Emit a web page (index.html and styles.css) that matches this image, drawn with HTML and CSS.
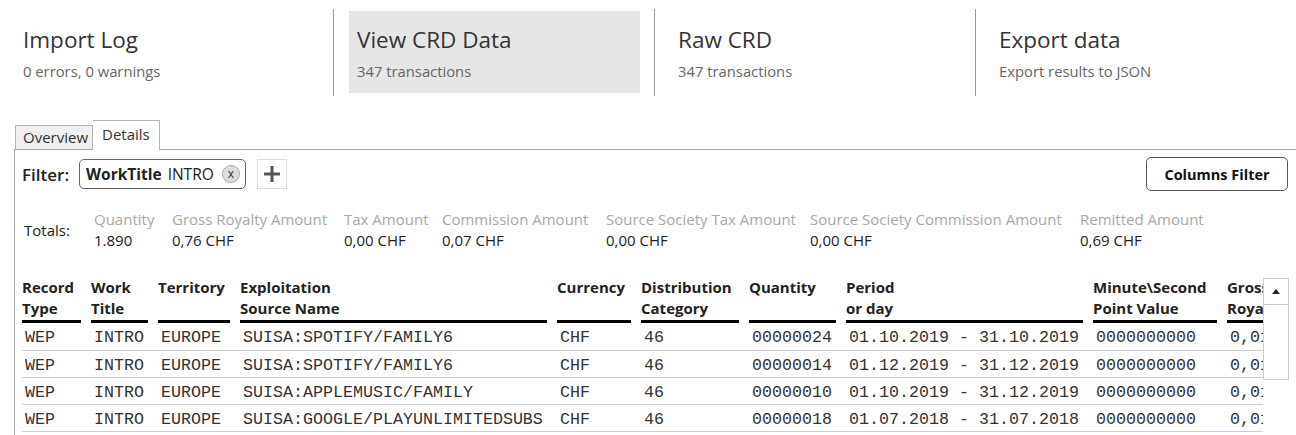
FILE: index.html
```html
<!DOCTYPE html>
<html lang="en">
<head>
    <meta charset="UTF-8">
    <title>CRD Viewer</title>
    <link rel="stylesheet" href="styles.css">
</head>
<body>
    <!-- Top navigation -->
    <div class="nav">
        <div class="nav-item">
            <div class="nav-box">
                <div class="nav-title">Import Log</div>
                <div class="nav-sub">0 errors, 0 warnings</div>
            </div>
        </div>
        <div class="nav-item">
            <div class="nav-box active">
                <div class="nav-title">View CRD Data</div>
                <div class="nav-sub">347 transactions</div>
            </div>
        </div>
        <div class="nav-item">
            <div class="nav-box">
                <div class="nav-title">Raw CRD</div>
                <div class="nav-sub">347 transactions</div>
            </div>
        </div>
        <div class="nav-item">
            <div class="nav-box">
                <div class="nav-title">Export data</div>
                <div class="nav-sub">Export results to JSON</div>
            </div>
        </div>
    </div>

    <!-- Tabs -->
    <div class="tabs">
        <div class="tab">Overview</div>
        <div class="tab active">Details</div>
    </div>

    <div class="panel">
        <!-- Filter row -->
        <div class="filter-row">
            <div class="filter-left">
                <span class="filter-label">Filter:</span>
                <span class="chip">
                    <b>WorkTitle</b>
                    <span class="chip-value">INTRO</span>
                    <span class="chip-x">x</span>
                </span>
                <button class="add-btn">
                    <svg width="18" height="18" viewBox="0 0 18 18">
                        <path d="M9 1v16M1 9h16" stroke="#555" stroke-width="3" fill="none"/>
                    </svg>
                </button>
            </div>
            <button class="cols-btn">Columns Filter</button>
        </div>

        <!-- Totals -->
        <div class="totals">
            <div class="totals-label">Totals:</div>
            <div class="tot"><div class="tot-name">Quantity</div><div class="tot-val">1.890</div></div>
            <div class="tot"><div class="tot-name">Gross Royalty Amount</div><div class="tot-val">0,76 CHF</div></div>
            <div class="tot"><div class="tot-name">Tax Amount</div><div class="tot-val">0,00 CHF</div></div>
            <div class="tot"><div class="tot-name">Commission Amount</div><div class="tot-val">0,07 CHF</div></div>
            <div class="tot"><div class="tot-name">Source Society Tax Amount</div><div class="tot-val">0,00 CHF</div></div>
            <div class="tot"><div class="tot-name">Source Society Commission Amount</div><div class="tot-val">0,00 CHF</div></div>
            <div class="tot"><div class="tot-name">Remitted Amount</div><div class="tot-val">0,69 CHF</div></div>
        </div>

        <!-- Data table -->
        <div class="table-wrap">
            <table class="grid">
                <colgroup>
                    <col style="width:69px"><col style="width:67px"><col style="width:82px">
                    <col style="width:317px"><col style="width:84px"><col style="width:108px">
                    <col style="width:97px"><col style="width:247px"><col style="width:134px">
                    <col style="width:150px">
                </colgroup>
                <thead>
                    <tr>
                        <th><div>Record<br>Type</div></th>
                        <th><div>Work<br>Title</div></th>
                        <th><div>Territory</div></th>
                        <th><div>Exploitation<br>Source Name</div></th>
                        <th><div>Currency</div></th>
                        <th><div>Distribution<br>Category</div></th>
                        <th><div>Quantity</div></th>
                        <th><div>Period<br>or day</div></th>
                        <th><div>Minute\Second<br>Point Value</div></th>
                        <th><div>Gross<br>Royalty</div></th>
                    </tr>
                </thead>
                <tbody>
                    <tr>
                        <td>WEP</td><td>INTRO</td><td>EUROPE</td><td>SUISA:SPOTIFY/FAMILY6</td><td>CHF</td>
                        <td>46</td><td>00000024</td><td>01.10.2019 - 31.10.2019</td><td>0000000000</td><td>0,01</td>
                    </tr>
                    <tr>
                        <td>WEP</td><td>INTRO</td><td>EUROPE</td><td>SUISA:SPOTIFY/FAMILY6</td><td>CHF</td>
                        <td>46</td><td>00000014</td><td>01.12.2019 - 31.12.2019</td><td>0000000000</td><td>0,01</td>
                    </tr>
                    <tr>
                        <td>WEP</td><td>INTRO</td><td>EUROPE</td><td>SUISA:APPLEMUSIC/FAMILY</td><td>CHF</td>
                        <td>46</td><td>00000010</td><td>01.10.2019 - 31.12.2019</td><td>0000000000</td><td>0,01</td>
                    </tr>
                    <tr>
                        <td>WEP</td><td>INTRO</td><td>EUROPE</td><td>SUISA:GOOGLE/PLAYUNLIMITEDSUBS</td><td>CHF</td>
                        <td>46</td><td>00000018</td><td>01.07.2018 - 31.07.2018</td><td>0000000000</td><td>0,01</td>
                    </tr>
                </tbody>
            </table>
        </div>

        <!-- Column scroller overlay -->
        <div class="scroller">
            <div class="scroller-up">
                <svg width="8" height="5" viewBox="0 0 8 5"><path d="M0 5L4 0L8 5Z" fill="#222"/></svg>
            </div>
        </div>
    </div>
</body>
</html>
```

FILE: styles.css
```css
/* General Styles */
body {
    margin: 0;
    font-family: "Open Sans", "Noto Sans", sans-serif;
    color: #222;
    background: #fff;
    overflow: hidden;
}

/* Top navigation */
.nav {
    display: grid;
    grid-template-columns: 334px 321px 321px 1fr;
    padding-top: 9px;
}

.nav-item {
    height: 87px;
    border-right: 1px solid #9a9a9a;
    padding: 2px 14px 0 15px;
    box-sizing: border-box;
}

.nav-item:last-child {
    border-right: none;
}

.nav-box {
    height: 82px;
    padding: 13px 8px 0 8px;
    box-sizing: border-box;
}

.nav-box.active {
    background-color: #e6e6e6;
}

.nav-title {
    font-size: 22.5px;
    line-height: 31px;
    color: #333;
}

.nav-sub {
    font-size: 14.8px;
    line-height: 20px;
    color: #666;
    margin-top: 6px;
}

/* Tabs */
.tabs {
    display: flex;
    align-items: flex-end;
    margin-top: 24px;
    padding-left: 15px;
    height: 29px;
    position: relative;
    z-index: 1;
}

.tab {
    font-size: 15px;
    color: #333;
    border: 1px solid #b4b4b4;
    border-bottom: none;
    background-color: #f0f0f0;
    height: 24px;
    line-height: 23px;
    padding: 0 4px 0 7px;
    box-sizing: border-box;
}

.tab.active {
    background-color: #fff;
    line-height: 26px;
    padding: 0 9px 0 9px;
    border-left: none;
    margin-bottom: -1px;
    height: 30px;
}

/* Panel */
.panel {
    position: relative;
    margin-left: 14px;
    border-top: 1px solid #a6a6a6;
    border-left: 1px solid #a6a6a6;
    padding: 7px 8px 0 7px;
    height: 279px;
}

.filter-row {
    display: flex;
    justify-content: space-between;
    align-items: center;
    height: 34px;
}

.filter-left {
    display: flex;
    align-items: center;
}

.filter-label {
    font-size: 17px;
    font-weight: 600;
    color: #222;
    margin-right: 10px;
}

.chip {
    display: flex;
    align-items: center;
    height: 30px;
    box-sizing: border-box;
    border: 1px solid #666;
    border-radius: 5px;
    padding: 0 5px 0 6px;
    font-size: 15.5px;
}

.chip b {
    font-weight: 700;
    margin-right: 6px;
}

.chip-value {
    margin-right: 8px;
}

.chip-x {
    width: 18px;
    height: 18px;
    border-radius: 50%;
    background-color: #dedede;
    border: 1px solid #a8a8a8;
    box-sizing: border-box;
    font-size: 12px;
    line-height: 15px;
    text-align: center;
    color: #333;
}

.add-btn {
    width: 30px;
    height: 30px;
    margin-left: 11px;
    border: 1px solid #dcdcdc;
    background: #fff;
    padding: 0;
    display: flex;
    align-items: center;
    justify-content: center;
}

.cols-btn {
    font-family: "Open Sans", "Noto Sans", sans-serif;
    font-size: 14.5px;
    font-weight: 700;
    color: #111;
    background: #fff;
    border: 1px solid #555;
    border-radius: 5px;
    height: 34px;
    width: 142px;
    padding: 0;
}

/* Totals */
.totals {
    display: grid;
    grid-template-columns: 72px 78px 172px 98px 164px 204px 270px 1fr;
    align-items: center;
    margin-top: 18px;
    font-size: 15px;
}

.totals-label {
    padding-left: 2px;
    color: #222;
}

.tot-name {
    color: #a8a8a8;
    line-height: 21px;
    white-space: nowrap;
}

.tot-val {
    color: #222;
    line-height: 21px;
    white-space: nowrap;
}

/* Data table */
.table-wrap {
    margin-top: 26px;
    width: 1241px;
    overflow: hidden;
}

.grid {
    border-collapse: collapse;
    table-layout: fixed;
    width: 1355px;
}

.grid th {
    padding: 0 10px 0 0;
    text-align: left;
    vertical-align: top;
    font-size: 15px;
    font-weight: 700;
    color: #222;
    white-space: nowrap;
    overflow: hidden;
}

.grid th div {
    height: 43px;
    line-height: 21px;
    border-bottom: 3px solid #000;
    overflow: hidden;
}

.grid td {
    height: 27px;
    padding: 3px 0 0 3px;
    box-sizing: border-box;
    border-bottom: 1px solid #cfcfcf;
    font-family: "Liberation Mono", "Courier New", monospace;
    font-size: 16.67px;
    color: #333;
    white-space: nowrap;
    overflow: hidden;
}

/* Scroller overlay */
.scroller {
    position: absolute;
    left: 1248px;
    top: 128px;
    width: 26px;
    height: 102px;
    box-sizing: border-box;
    border: 1px solid #cdcdcd;
    background: #fff;
}

.scroller-up {
    height: 25px;
    border-bottom: 1px solid #cdcdcd;
    display: flex;
    align-items: center;
    justify-content: center;
}
```
